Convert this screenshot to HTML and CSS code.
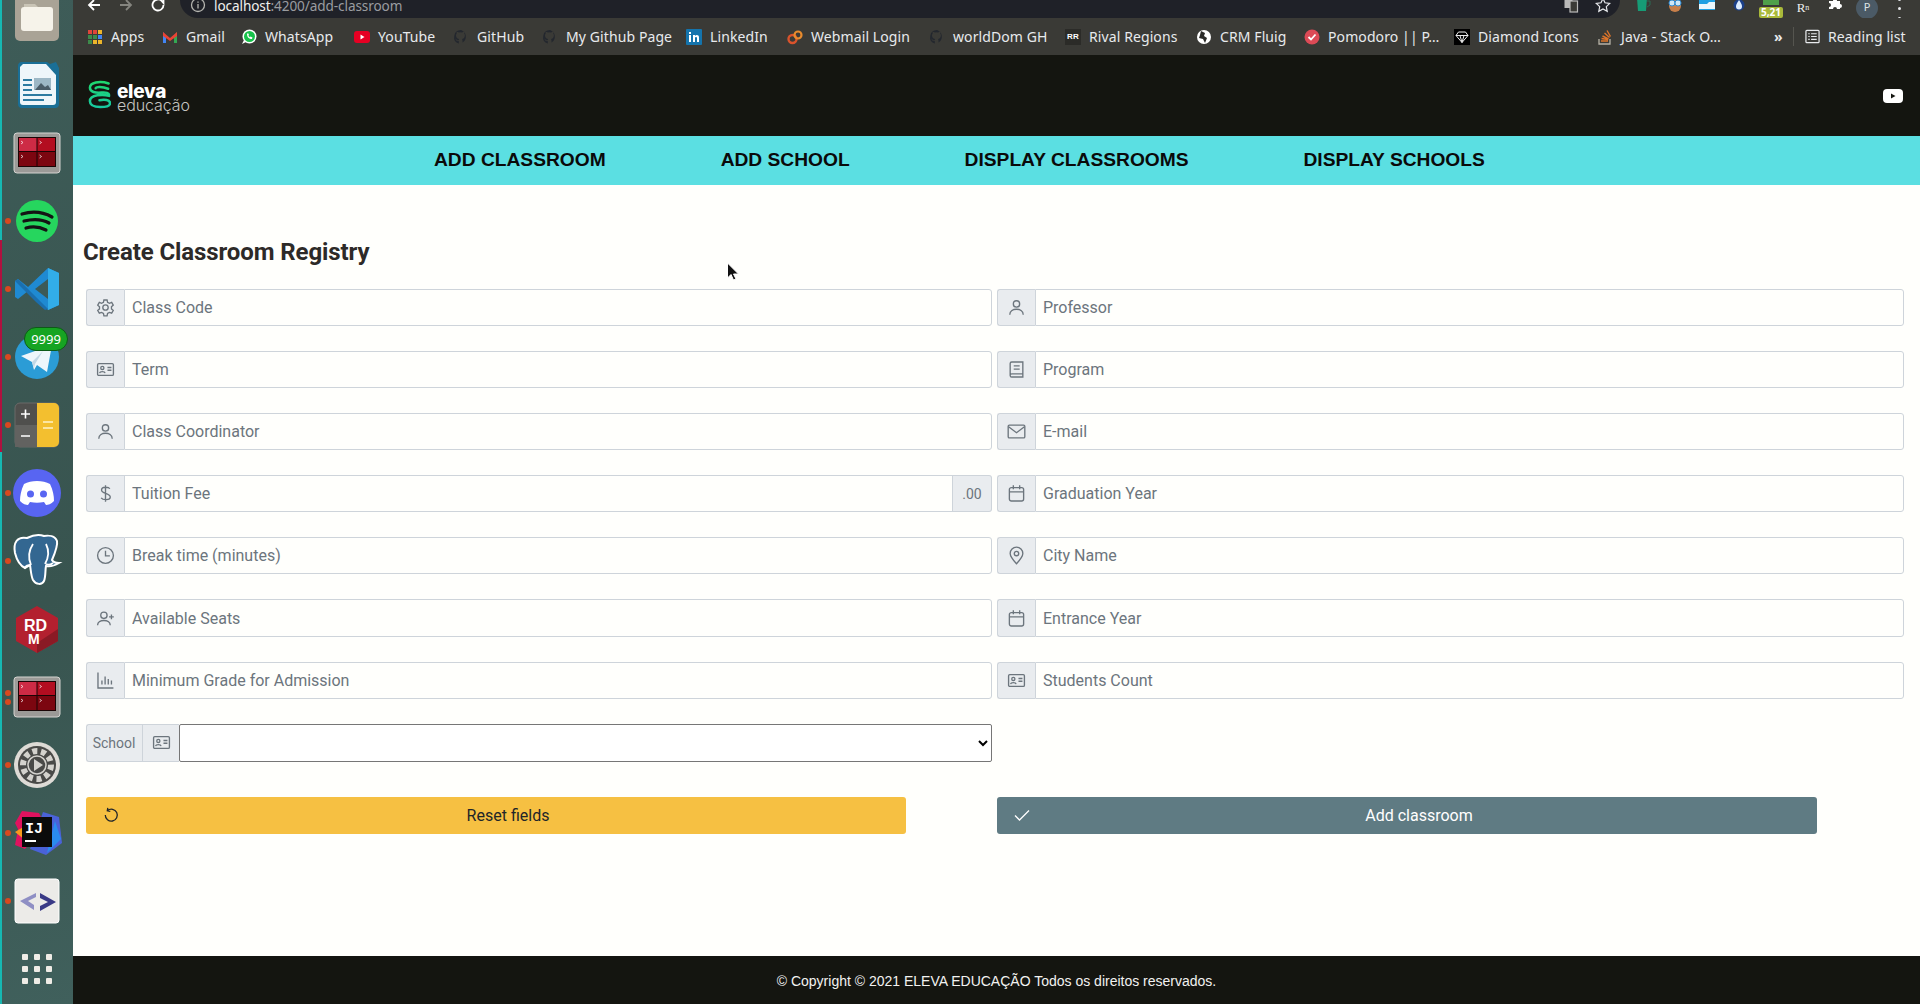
FILE: index.html
```html
<!DOCTYPE html>
<html lang="pt-BR">
<head>
  <meta charset="UTF-8" />
  <title>Create Classroom Registry</title>
  <link rel="stylesheet" href="styles.css">
</head>
<body>
  <!-- form icons -->
  <svg class="defs" width="0" height="0">
    <symbol id="i-gear" viewBox="0 0 24 24"><circle cx="12" cy="12" r="3.4"/><path d="M10 2.5h4l.6 3 2.4 1.2 2.8-1.1 2 3.4-2.3 2 .1 2.9 2.2 1.9-2 3.4-2.8-1-2.4 1.3-.6 3h-4l-.6-3-2.4-1.3-2.8 1-2-3.4 2.2-1.9V11L2.2 9l2-3.4L7 6.7l2.4-1.2z"/></symbol>
    <symbol id="i-card" viewBox="0 0 24 24"><rect x="2" y="4.5" width="20" height="15" rx="1.5"/><circle cx="8" cy="10" r="2"/><path d="M4.5 16.5c.5-2.5 6.500-2.500 7 0M14.500 9.500h5M14.500 13h5"/></symbol>
    <symbol id="i-user" viewBox="0 0 24 24"><circle cx="12" cy="7.500" r="4"/><path d="M3.500 21c0-9 17-9 17 0"/></symbol>
    <symbol id="i-dollar" viewBox="0 0 24 24"><path d="M12 1.500v21M17.500 6C16 3.500 7 3 7 7.500c0 5 11 3.500 11 9 0 4.500-9.500 4-11.500 1"/></symbol>
    <symbol id="i-clock" viewBox="0 0 24 24"><circle cx="12" cy="12" r="10"/><path d="M12 6v6.500h5.500"/></symbol>
    <symbol id="i-useradd" viewBox="0 0 24 24"><circle cx="10" cy="8" r="4"/><path d="M2 20.500c0-8 16-8 16 0M19.500 7v6M16.500 10h6"/></symbol>
    <symbol id="i-chart" viewBox="0 0 24 24"><path d="M2.500 2v19.500H22M7.500 17v-5M11.500 17V7M15.500 17v-7M19.500 17v-5"/></symbol>
    <symbol id="i-book" viewBox="0 0 24 24"><path d="M4 19.500V4.500A2 2 0 0 1 6 2.500h14v19H6a2 2 0 0 1 0-4h14M8.500 7.500h7.500M8.500 11.500h7.500"/></symbol>
    <symbol id="i-mail" viewBox="0 0 24 24"><rect x="1.500" y="4" width="21" height="16" rx="1.500"/><path d="M2 6l10 7.500L22 6"/></symbol>
    <symbol id="i-cal" viewBox="0 0 24 24"><rect x="3" y="4.500" width="18" height="17" rx="2.500"/><path d="M3 10h18M8 1.500v5M16 1.500v5"/></symbol>
    <symbol id="i-pin" viewBox="0 0 24 24"><path d="M12 22.500C7 17 4 13.500 4 9.500a8 8 0 0 1 16 0c0 4-3 7.500-8 13z"/><circle cx="12" cy="9.500" r="2.800"/></symbol>
    <symbol id="i-gh" viewBox="0 0 16 16"><path d="M8 1a7 7 0 0 0-2.200 13.600v-2.500C3.500 12.500 3 11 3 11c-.4-1-.9-1.200-.9-1.200.8 0 1.300.7 1.300.7.700 1.200 1.900.8 2.300.6 0-.5.300-.9.500-1.100C4.500 9.800 3 9 3 6.500c0-.8.300-1.400.7-1.900 0-.2-.3-.9.100-1.800 0 0 .6-.2 1.900.7a6.600 6.600 0 0 1 3.500 0c1.300-.9 1.900-.7 1.900-.7.400.9.100 1.600.1 1.800.4.500.7 1.100.7 1.900 0 2.500-1.500 3.300-2.900 3.500.2.200.5.700.5 1.300v2.300A7 7 0 0 0 8 1z"/></symbol>
  </svg>

  <div class="screen">
    <aside class="dock">
      <div class="slot">
        <svg viewBox="0 0 60 60" width="60" height="60"><rect x="8" y="2" width="44" height="52" rx="5" fill="#a9a396"/><path d="M17 17h11l3 3H17z" fill="#c9c4b6"/><path d="M14 23a3 3 0 0 1 3-3h26a3 3 0 0 1 3 3v18a3 3 0 0 1-3 3H17a3 3 0 0 1-3-3z" fill="#f6f3ea"/></svg>
      </div>
      <div class="slot">
        <svg viewBox="0 0 60 60" width="60" height="60"><path d="M14 7h26l3 2 6-2 3 6v36a4 4 0 0 1-4 4H15a4 4 0 0 1-4-4V11a4 4 0 0 1 3-4z" fill="#1a6f96"/><path d="M16 9h23l10 11v27a3 3 0 0 1-3 3H16a3 3 0 0 1-3-3V12z" fill="#eef6fa"/><path d="M16 24h9v2h-9zM16 29h9v2h-9zM16 34h9v2h-9zM16 39h29v2H16zM16 44h21v2H16z" fill="#2c7ba1"/><rect x="27" y="23" width="17" height="12" fill="#9db8c6"/><path d="M28 35l6-7 4 4 3-2 3 5z" fill="#4a5d68"/></svg>
      </div>
      <div class="slot">
        <svg viewBox="0 0 60 60" width="60" height="60"><use href="#term"/></svg>
      </div>
      <div class="slot running">
        <svg viewBox="0 0 60 60" width="60" height="60"><circle cx="30" cy="30" r="21" fill="#26d65e"/><path d="M15 23c10-3 21-2 30 3M17 30c8-2 18-2 25 2M19 37c7-2 14-1 20 2" fill="none" stroke="#141414" stroke-width="3.200" stroke-linecap="round"/></svg>
      </div>
      <div class="slot running">
        <svg viewBox="0 0 60 60" width="60" height="60"><path d="M41 9l11 5v32l-11 5-20-19-10 8-3-2v-16l3-2 10 8z" fill="#1f8ad2"/><path d="M41 9l11 5v32l-11 5z" fill="#32ade8"/><path d="M41 20L28 30l13 10z" fill="#3c5a57"/><path d="M8 22l3-2 30 30-3 1-9-8z" fill="#1b6fae"/></svg>
      </div>
      <div class="slot running">
        <svg viewBox="0 0 60 60" width="60" height="60"><circle cx="30" cy="30" r="22" fill="#2b9cd6"/><path d="M14 29l31-11-5 27-10-7-3 5-2-8z" fill="#eef6fb"/><path d="M25 35l11-11-8 13-1 4z" fill="#c2d8e6"/></svg>
        <span class="badge">9999</span>
      </div>
      <div class="slot running">
        <svg viewBox="0 0 60 60" width="60" height="60"><rect x="8" y="8" width="44" height="44" rx="5" fill="#4f4f4d" stroke="#6a6a68"/><rect x="8" y="30" width="22" height="22" fill="#626260"/><path d="M30 8h17a5 5 0 0 1 5 5v34a5 5 0 0 1-5 5H30z" fill="#f3bf2f"/><path d="M14 19h9M18.500 14.500v9M14 41h9" stroke="#fff" stroke-width="1.600"/><path d="M36 27h10M36 33h10" stroke="#fff3c8" stroke-width="1.500"/></svg>
      </div>
      <div class="slot running">
        <svg viewBox="0 0 60 60" width="60" height="60"><circle cx="30" cy="30" r="24" fill="#5865f2"/><path d="M17 21c7-4 19-4 26 0 3 6 4 12 4 17-3 3-6 4-8 4l-2-3c-5 1-9 1-14 0l-2 3c-2 0-5-1-8-4 0-5 1-11 4-17z" fill="#fff"/><circle cx="23.500" cy="31" r="3.500" fill="#5865f2"/><circle cx="36.500" cy="31" r="3.500" fill="#5865f2"/></svg>
      </div>
      <div class="slot running">
        <svg viewBox="0 0 60 60" width="60" height="60"><path d="M20 7C10 5 6 12 8 22c2 8 6 13 10 15l5-3c1 6 1 11 3 15 3 5 9 5 11 1 2-5 1-11 2-15 4 1 8 0 13-3-3 0-6-1-7-3 3-7 6-14 5-19-2-5-8-6-13-5-5-2-11-1-17 2z" fill="#336791" stroke="#fff" stroke-width="2"/><path d="M26 13c-4 6-5 14-2 21M39 13c3 6 3 13-1 20M17 37c2-2 4-3 6-3M39 33c3 1 5 1 7-1" fill="none" stroke="#fff" stroke-width="1.800"/></svg>
      </div>
      <div class="slot">
        <svg viewBox="0 0 60 60" width="60" height="60"><path d="M30 7l21 12v23L30 54 9 42V19z" fill="#b3202f"/><path d="M51 30v12L30 54V44z" fill="#8a1a25"/><text x="17" y="32" class="rd">RD</text><text x="21" y="45" class="rd-m">M</text></svg>
      </div>
      <div class="slot two">
        <svg viewBox="0 0 60 60" width="60" height="60"><use href="#term"/></svg>
      </div>
      <div class="slot running">
        <svg viewBox="0 0 60 60" width="60" height="60"><circle cx="30" cy="30" r="23" fill="#dedbd6"/><circle cx="30" cy="30" r="19" fill="#4a4a48"/><circle cx="30" cy="30" r="14" fill="none" stroke="#d4d2cd" stroke-width="6" stroke-dasharray="5 3.700"/><circle cx="30" cy="30" r="9" fill="#4a4a48" stroke="#d4d2cd" stroke-width="1.500"/><path d="M27 24l9 6-9 6z" fill="#d4d2cd"/></svg>
      </div>
      <div class="slot running">
        <svg viewBox="0 0 60 60" width="60" height="60"><path d="M15 8l17 2 6 12-20 24-10-4 3-16-3-6z" fill="#e0125f"/><path d="M36 9l16 5 3 26-16 12-16-6z" fill="#4a62d8"/><path d="M48 18l6 18-14 14z" fill="#2a8cef"/><path d="M8 29l10-6v14z" fill="#f79a1c"/><rect x="15" y="14" width="30" height="30" fill="#0b0b0b"/><text x="18" y="30" class="ij">IJ</text><rect x="18" y="37" width="11" height="2" fill="#fff"/></svg>
      </div>
      <div class="slot running">
        <svg viewBox="0 0 60 60" width="60" height="60"><rect x="8" y="8" width="44" height="44" rx="3" fill="#ecebe8" stroke="#fff"/><path d="M29 22L13 30l14 9v-5l-6-4 8-4z" fill="#8f8fc4"/><path d="M33 22l16 9-16 9v-5l8-4-8-4z" fill="#3a3a86"/></svg>
      </div>
      <div class="slot">
        <div class="apps"><i></i><i></i><i></i><i></i><i></i><i></i><i></i><i></i><i></i></div>
      </div>
      <svg class="defs" width="0" height="0">
        <symbol id="term" viewBox="0 0 60 60"><rect x="7" y="10" width="46" height="40" rx="3" fill="#9b9a97" stroke="#d4d3d0"/><rect x="11" y="14" width="38" height="30" fill="#1a0505"/><rect x="12" y="15" width="17.500" height="13" fill="#cd2b45"/><rect x="30.500" y="15" width="17.500" height="13" fill="#b30d20"/><rect x="12" y="29" width="17.500" height="14" fill="#7c0610"/><rect x="30.500" y="29" width="17.500" height="14" fill="#7c0610"/><path d="M14 18l2 1.500-2 1.500M32.500 18l2 1.500-2 1.500M14 32l2 1.500-2 1.500M32.500 32l2 1.500-2 1.500" stroke="#fff" fill="none" stroke-width=".7"/></symbol>
      </svg>
    </aside>

    <div class="browser">
      <div class="toolbar">
        <div class="toolbar-row">
          <svg class="tb-ico" viewBox="0 0 16 16"><path d="M14 8H3M8 3L3 8l5 5"/></svg>
          <svg class="tb-ico dim" viewBox="0 0 16 16"><path d="M2 8h11M8 3l5 5-5 5"/></svg>
          <svg class="tb-ico" viewBox="0 0 16 16"><path d="M13.500 8a5.500 5.500 0 1 1-1.600-3.900L13.500 6V2"/></svg>
          <div class="omnibox">
            <svg class="info" viewBox="0 0 16 16"><circle cx="8" cy="8" r="6.500"/><path d="M8 7v4.500M8 4.500v1.200"/></svg>
            <span class="url"><b>localhost</b>:4200/add-classroom</span>
            <svg class="omni-ico" viewBox="0 0 16 16"><rect x="1.500" y="1" width="8" height="10" fill="#b9b9b9" stroke="none"/><rect x="7" y="4" width="7.500" height="11" fill="#3a3a36" stroke="#b9b9b9"/></svg>
            <svg class="omni-ico" viewBox="0 0 16 16"><path d="M8 1.500l2 4.300 4.700.6-3.400 3.200.9 4.700L8 12l-4.200 2.300.9-4.700L1.300 6.400 6 5.800z"/></svg>
          </div>
          <div class="extensions">
            <span class="ext"><svg viewBox="0 0 16 16" width="16" height="16"><path d="M2 0h10l-1 13H3z" fill="#169c76"/><path d="M12 3h3v4l-3 2" fill="none" stroke="#2a6b55"/></svg></span>
            <span class="ext"><svg viewBox="0 0 16 16" width="16" height="16"><circle cx="8" cy="8" r="6" fill="#c87f4a"/><circle cx="5" cy="5" r="3" fill="#cfe7f7" stroke="#2f8ad1"/><circle cx="11" cy="5" r="3" fill="#cfe7f7" stroke="#2f8ad1"/></svg></span>
            <span class="ext"><svg viewBox="0 0 16 16" width="16" height="16"><rect y="0" width="16" height="12" fill="#1e9fe2"/><path d="M0 6h8l2-2h6v7H0z" fill="#eaf6fc"/></svg></span>
            <span class="ext"><svg viewBox="0 0 16 16" width="16" height="16"><circle cx="8" cy="7" r="5.500" fill="#1b3f88"/><path d="M8 2c2 3 3 4.500 3 6.500a3 3 0 0 1-6 0C5 6.500 6 5 8 2z" fill="#dcecff"/></svg></span>
            <span class="ext ext-count"><span class="ext-count-top"></span><span class="ext-count-num">5,21</span></span>
            <span class="ext ext-r">R<small>n</small></span>
            <span class="ext"><svg viewBox="0 0 16 16" width="16" height="16"><path d="M2 3h4a2 2 0 0 1 4 0h3v3a2 2 0 0 1 0 4v1H10a2 2 0 0 0-4 0H2V9a2 2 0 0 0 0-4z" fill="#fff"/></svg></span>
            <span class="ext"><span class="avatar">P</span></span>
            <span class="ext"><span class="kebab"><i></i><i></i><i></i></span></span>
          </div>
        </div>
      </div>

      <div class="bookmarks">
        <div class="marks">
          <a class="mark"><svg viewBox="0 0 16 16" width="16" height="16"><path d="M1 1h4v4H1z" fill="#e0453a"/><path d="M6 1h4v4H6z" fill="#e0453a"/><path d="M11 1h4v4h-4z" fill="#ecb52b"/><path d="M1 6h4v4H1zM6 6h4v4H6z" fill="#3d8a4a"/><path d="M11 6h4v4h-4z" fill="#4285f4"/><path d="M1 11h4v4H1z" fill="#3d8a4a"/><path d="M6 11h4v4H6z" fill="#ecb52b"/><path d="M11 11h4v4h-4z" fill="#ecb52b"/></svg>Apps</a>
          <a class="mark"><svg viewBox="0 0 16 16" width="16" height="16"><path d="M1 3v11h3V7z" fill="#4285f4"/><path d="M15 3v11h-3V7z" fill="#34a853"/><path d="M1 3l7 6 7-6v4l-7 5-7-5z" fill="#ea4335"/></svg>Gmail</a>
          <a class="mark"><svg viewBox="0 0 16 16" width="16" height="16"><circle cx="8.500" cy="7.500" r="7" fill="#fff"/><circle cx="8.500" cy="7.500" r="5.500" fill="#17c24a"/><path d="M1 15l2-4 2 2z" fill="#fff"/><path d="M6 5c0 3 2 5 5 5l.5-1.500-2-1-.7.700-1.500-1.500.7-.7-1-2z" fill="#fff"/></svg>WhatsApp</a>
          <a class="mark"><svg viewBox="0 0 16 16" width="16" height="16"><rect x="0" y="2" width="16" height="12" rx="3" fill="#e60023"/><path d="M6.500 5.500l4 2.500-4 2.500z" fill="#fff"/></svg>YouTube</a>
          <a class="mark"><svg class="gh" width="16" height="16"><use href="#i-gh"/></svg>GitHub</a>
          <a class="mark"><svg class="gh" width="16" height="16"><use href="#i-gh"/></svg>My Github Page</a>
          <a class="mark"><svg viewBox="0 0 16 16" width="16" height="16"><rect width="16" height="16" rx="1" fill="#1474ad"/><path d="M3 6h2v7H3zM3 3h2v2H3zM7 6h2v1c1-1.500 4-1.500 4 1.500V13h-2V9c0-1.500-2-1.500-2 0v4H7z" fill="#fff"/></svg>LinkedIn</a>
          <a class="mark"><svg viewBox="0 0 16 16" width="16" height="16"><circle cx="5.500" cy="10" r="4" fill="none" stroke="#d9532c" stroke-width="2.400"/><circle cx="11" cy="6" r="3.500" fill="none" stroke="#e88b2d" stroke-width="2.200"/></svg>Webmail Login</a>
          <a class="mark"><svg class="gh" width="16" height="16"><use href="#i-gh"/></svg>worldDom GH</a>
          <a class="mark"><span class="rr">RR</span>Rival Regions</a>
          <a class="mark"><svg viewBox="0 0 16 16" width="16" height="16"><circle cx="8" cy="8" r="7" fill="#fff"/><path d="M5 2l4 2-1 3 3 2-2 5-2-4-4-1 1-3z" fill="#2b2b28"/></svg>CRM Fluig</a>
          <a class="mark"><svg viewBox="0 0 16 16" width="16" height="16"><circle cx="8" cy="8" r="7.500" fill="#dc4a56"/><path d="M4.500 8l2.500 2.500 4.500-5" fill="none" stroke="#fff" stroke-width="1.800"/></svg>Pomodoro || P…</a>
          <a class="mark"><svg viewBox="0 0 16 16" width="16" height="16"><rect width="16" height="16" fill="#000"/><path d="M4.500 3h7L14 6.500 8 13.500 2 6.500zM2 6.500h12M6 6.500L8 13.500 10 6.500" fill="none" stroke="#eee"/></svg>Diamond Icons</a>
          <a class="mark"><svg viewBox="0 0 16 16" width="16" height="16"><path d="M2 10v5h11v-5" fill="none" stroke="#b6b1a6" stroke-width="1.300"/><path d="M4 12h7M4.500 9.500l6.500 1M5.500 7l6 3M7.500 4l5 4.500M10 1.500l3.500 6" stroke="#e0752a" stroke-width="1.400"/></svg>Java - Stack O…</a>
        </div>
        <span class="more">»</span>
        <span class="reading"><svg viewBox="0 0 16 16" width="15" height="15"><rect x="1" y="1.500" width="14" height="13" rx="1" fill="none" stroke="#e8eaed" stroke-width="1.300"/><path d="M3.500 5h1.500M6.500 5h6M3.500 8h1.500M6.500 8h6M3.500 11h1.500M6.500 11h6" stroke="#e8eaed" stroke-width="1.200"/></svg>Reading list</span>
      </div>

      <header class="top">
        <div class="logo">
          <svg viewBox="0 0 24 30" width="23" height="29"><defs><linearGradient id="lg" x1="0" y1="0" x2="0" y2="1"><stop offset="0" stop-color="#1fd86f"/><stop offset="1" stop-color="#17c9a0"/></linearGradient></defs><path d="M21.500 3.500C12 .5 2 2.500 2 8c0 4.500 6 5.500 12 5 5-.5 8 .5 8 2.500M21 9C15 6.800 8 6.800 8 8.500M22 16.500C16 14.500 2 15 2 22c0 5 6 6 11 6s10-1 10-4c0-3.500-6-4-11-3" fill="none" stroke="url(#lg)" stroke-width="2.600" stroke-linecap="round"/></svg>
          <div class="logo-text">
            <span class="logo-name">eleva</span>
            <span class="logo-sub">educação</span>
          </div>
        </div>
        <svg class="yt" viewBox="0 0 20 14" width="20" height="14"><rect width="20" height="14" rx="4" fill="#fff"/><path d="M8 4.500l4.500 2.500L8 9.500z" fill="#141510"/></svg>
      </header>

      <nav class="menu">
        <a>ADD CLASSROOM</a>
        <a>ADD SCHOOL</a>
        <a>DISPLAY CLASSROOMS</a>
        <a>DISPLAY SCHOOLS</a>
      </nav>

      <main class="content">
        <h2 class="title">Create Classroom Registry</h2>

        <form class="fields">
          <div class="group"><span class="addon"><svg class="ico"><use href="#i-gear"/></svg></span><input placeholder="Class Code"></div>
          <div class="group"><span class="addon"><svg class="ico"><use href="#i-user"/></svg></span><input placeholder="Professor"></div>
          <div class="group"><span class="addon"><svg class="ico"><use href="#i-card"/></svg></span><input placeholder="Term"></div>
          <div class="group"><span class="addon"><svg class="ico"><use href="#i-book"/></svg></span><input placeholder="Program"></div>
          <div class="group"><span class="addon"><svg class="ico"><use href="#i-user"/></svg></span><input placeholder="Class Coordinator"></div>
          <div class="group"><span class="addon"><svg class="ico"><use href="#i-mail"/></svg></span><input placeholder="E-mail"></div>
          <div class="group"><span class="addon"><svg class="ico"><use href="#i-dollar"/></svg></span><input placeholder="Tuition Fee"><span class="addon addon-end">.00</span></div>
          <div class="group"><span class="addon"><svg class="ico"><use href="#i-cal"/></svg></span><input placeholder="Graduation Year"></div>
          <div class="group"><span class="addon"><svg class="ico"><use href="#i-clock"/></svg></span><input placeholder="Break time (minutes)"></div>
          <div class="group"><span class="addon"><svg class="ico"><use href="#i-pin"/></svg></span><input placeholder="City Name"></div>
          <div class="group"><span class="addon"><svg class="ico"><use href="#i-useradd"/></svg></span><input placeholder="Available Seats"></div>
          <div class="group"><span class="addon"><svg class="ico"><use href="#i-cal"/></svg></span><input placeholder="Entrance Year"></div>
          <div class="group"><span class="addon"><svg class="ico"><use href="#i-chart"/></svg></span><input placeholder="Minimum Grade for Admission"></div>
          <div class="group"><span class="addon"><svg class="ico"><use href="#i-card"/></svg></span><input placeholder="Students Count"></div>
          <div class="group group-select">
            <span class="addon addon-label">School</span>
            <span class="addon addon-mid"><svg class="ico"><use href="#i-card"/></svg></span>
            <select><option></option></select>
          </div>
        </form>

        <div class="actions">
          <button class="btn btn-reset" type="button">
            <svg viewBox="0 0 16 16" width="16" height="16"><path d="M4.500 3.500A6 6 0 1 1 2.300 8M4.800 .8L4.300 3.700l3 .6"/></svg>
            Reset fields
          </button>
          <button class="btn btn-add" type="button">
            <svg viewBox="0 0 16 16" width="16" height="16"><path d="M1 8.500l4.500 4.500L15 3.500"/></svg>
            Add classroom
          </button>
        </div>

        <svg class="pointer" viewBox="0 0 14 20" width="14" height="20"><path d="M1.500 1v15l3.500-3.500 2.500 5.500 2.500-1-2.500-5h5z" fill="#111" stroke="#fff"/></svg>
      </main>

      <footer class="foot">© Copyright © 2021 ELEVA EDUCAÇÃO Todos os direitos reservados.</footer>
    </div>
  </div>
</body>
</html>
```

FILE: styles.css
```css
* {
  box-sizing: border-box;
}

body {
  margin: 0;
  height: 100vh;
  overflow: hidden;
  background: #fffffc;
  font-family: Roboto, sans-serif;
}

.defs {
  position: absolute;
}

.screen {
  display: flex;
  height: 1004px;
}

/* ubuntu dock */
.dock {
  width: 73px;
  flex: none;
  height: 1004px;
  overflow: hidden;
  background: linear-gradient(160deg, #3e5c58, #38544f 60%, #40605c);
  border-left: 2px solid #16b8b2;
  border-image: linear-gradient(to bottom, #16b8b2 0 24%, #b0103f 24% 45%, #16b8b2 45% 100%) 1;
}

.slot {
  position: relative;
  height: 68px;
  display: flex;
  align-items: center;
  justify-content: center;
  margin-left: -2px;
}

.slot:first-child {
  margin-top: -17px;
}

.running::before,
.two::before,
.two::after {
  content: "";
  position: absolute;
  left: 5px;
  top: 31px;
  width: 6px;
  height: 6px;
  border-radius: 50%;
  background: #d9481f;
}

.two::before {
  top: 27px;
}

.two::after {
  top: 36px;
}

.badge {
  position: absolute;
  left: 24px;
  top: 4px;
  width: 44px;
  height: 24px;
  border-radius: 12px;
  background: #16a422;
  border: 1px solid #0d5a18;
  color: #fff;
  font: 13px/22px "Noto Sans", sans-serif;
  text-align: center;
}

.rd {
  font: bold 16px "Liberation Sans", sans-serif;
  fill: #fff;
}

.rd-m {
  font: bold 14px "Liberation Sans", sans-serif;
  fill: #fff;
}

.ij {
  font: bold 15px "Liberation Mono", monospace;
  fill: #fff;
}

.apps {
  display: grid;
  grid-template-columns: repeat(3, 6px);
  gap: 6px;
}

.apps i {
  height: 6px;
  border-radius: 1px;
  background: #efece6;
}

.browser {
  flex: 1;
  min-width: 0;
  display: flex;
  flex-direction: column;
}

/* chrome toolbar, cut off at the top of the shot */
.toolbar {
  height: 18px;
  overflow: hidden;
  background: #3a3a36;
}

.toolbar-row {
  display: flex;
  gap: 16px;
  height: 36px;
  margin-top: -13px;
  padding: 0 5px 0 13px;
  align-items: center;
}

.tb-ico {
  width: 16px;
  height: 16px;
  flex: none;
  fill: none;
  stroke: #fff;
  stroke-width: 1.800;
}

.tb-ico.dim {
  stroke: #85857f;
}

.omnibox {
  flex: 1;
  align-self: flex-start;
  height: 31px;
  padding: 5px 9px 0 10px;
  margin: 0 -9px 0 -2px;
  display: flex;
  align-items: center;
  gap: 8px;
  background: #1f2128;
  border-radius: 0 0 18px 18px;
}

.info {
  width: 16px;
  height: 16px;
  fill: none;
  stroke: #b5b5b0;
  stroke-width: 1.300;
}

.url {
  flex: 1;
  color: #9a9ca0;
  font: 13.600px "Noto Sans", sans-serif;
  letter-spacing: -.1px;
}

.url b {
  font-weight: 400;
  color: #f1f1ee;
}

.omni-ico {
  width: 16px;
  height: 16px;
  margin-left: 8px;
  fill: none;
  stroke: #e8eaed;
  stroke-width: 1.200;
}

.extensions {
  display: flex;
}

.ext {
  width: 32px;
  height: 36px;
  padding-top: 13px;
  display: flex;
  justify-content: center;
  position: relative;
  overflow: hidden;
}

.ext svg {
  margin-top: -2px;
}

.ext-count-top {
  position: absolute;
  top: 13px;
  left: 8px;
  width: 16px;
  height: 5px;
  background: #4fa04a;
}

.ext-count-num {
  position: absolute;
  top: 20px;
  left: 4px;
  width: 24px;
  height: 11px;
  border-radius: 2px;
  background: #a9b93a;
  color: #fff;
  font: bold 10px/11px "Noto Sans", sans-serif;
  text-align: center;
}

.ext-r {
  color: #eceef0;
  font: 13px/15px "Liberation Serif", serif;
}

.ext-r small {
  font-size: 8px;
}

.avatar {
  width: 22px;
  height: 22px;
  margin-top: -3px;
  border-radius: 50%;
  background: #4b5a66;
  color: #dfe3e6;
  font: 11px/20px "Noto Sans", sans-serif;
  text-align: center;
}

.kebab {
  display: grid;
  gap: 3px;
  margin-top: -2px;
}

.kebab i {
  width: 3px;
  height: 3px;
  border-radius: 50%;
  background: #e8eaed;
}

.bookmarks {
  height: 37px;
  display: flex;
  align-items: center;
  padding-left: 14px;
  background: #3a3a36;
  color: #e8eaed;
  font: 14px "Noto Sans", sans-serif;
  letter-spacing: .1px;
  white-space: nowrap;
}

.marks {
  display: grid;
  grid-template-columns: 75px 79px 113px 99px 89px 144px 101px 142px 136px 131px 108px 150px 143px 178px;
}

.mark {
  display: flex;
  align-items: center;
  gap: 8px;
}

.gh {
  fill: #23272e;
}

.rr {
  width: 16px;
  height: 16px;
  background: #2b2b28;
  color: #fff;
  font: bold 8px/16px "Liberation Sans", sans-serif;
  text-align: center;
}

.more {
  margin-left: -1px;
  width: 15px;
  font-weight: 700;
}

.reading {
  display: flex;
  align-items: center;
  gap: 8px;
  margin-left: 4px;
  padding-left: 11px;
  border-left: 1px solid #55554f;
}

.top {
  height: 81px;
  flex: none;
  display: flex;
  align-items: center;
  justify-content: space-between;
  padding: 0 17px 0 15px;
  background: #141510;
}

.logo {
  display: flex;
  align-items: flex-start;
  gap: 6px;
  margin-top: 1px;
}

.logo-text {
  display: flex;
  flex-direction: column;
  margin-top: 5px;
}

.logo-name {
  color: #fff;
  font: 800 19px/14px Inter, sans-serif;
  letter-spacing: -.3px;
}

.logo-sub {
  margin-top: -1px;
  color: #c4c4c0;
  font: 300 16px/14px Inter, sans-serif;
  letter-spacing: -.1px;
}

.menu {
  height: 49px;
  flex: none;
  display: flex;
  align-items: center;
  gap: 115px;
  padding: 0 0 2px 361px;
  background: #5bdfe2;
  color: #0a0a0a;
  font: bold 19.200px "Liberation Sans", sans-serif;
  white-space: nowrap;
}

.content {
  flex: 1;
  position: relative;
  padding: 51px 16px 0 13px;
  background: #fffffc;
}

.title {
  margin: 1px 0 22px -3px;
  height: 30px;
  color: #2d2a28;
  font: 700 24px/30px Roboto, sans-serif;
  letter-spacing: -.1px;
}

.fields {
  display: grid;
  grid-template-columns: 906px 1fr;
  grid-auto-rows: 37.100px;
  gap: 25px 5px;
}

.group {
  display: flex;
  align-items: stretch;
}

.addon {
  flex: none;
  width: 37.500px;
  display: flex;
  align-items: center;
  justify-content: center;
  background: #e9ecef;
  border: 1.500px solid #ced4da;
  border-right-width: 0;
  border-radius: 3px 0 0 3px;
  color: #6c757d;
  font-size: 14px;
}

.addon-end {
  width: 39px;
  border-right-width: 1.500px;
  border-left-width: 0;
  border-radius: 0 3px 3px 0;
}

.ico {
  width: 19px;
  height: 19px;
  fill: none;
  stroke: #6c757d;
  stroke-width: 1.700;
}

.group input {
  flex: 1;
  min-width: 0;
  padding: 0 7.500px;
  border: 1.500px solid #ced4da;
  border-radius: 0 3px 3px 0;
  background: #fffffc;
  font: 16px Roboto, sans-serif;
  outline: none;
}

.group input::placeholder {
  color: #6c757d;
  opacity: 1;
}

.group input:not(:last-child) {
  border-radius: 0;
}

.group-select {
  height: 38px;
}

.addon-label {
  width: 56px;
  padding-right: 1px;
}

.addon-mid {
  width: 37px;
  border-radius: 0;
}

.group-select select {
  flex: 1;
  min-width: 0;
  height: 38px;
  border: 1px solid #767676;
  border-radius: 2px;
  background: #fff;
}

.actions {
  display: grid;
  grid-template-columns: 906px 1fr;
  gap: 5px;
  margin-top: 36px;
}

.btn {
  position: relative;
  width: 820px;
  height: 37px;
  padding: 0 0 0 24px;
  border: 0;
  border-radius: 3px;
  font: 16px Roboto, sans-serif;
}

.btn svg {
  position: absolute;
  left: 17px;
  top: 10px;
  fill: none;
  stroke: currentColor;
  stroke-width: 1.300;
}

.btn-reset {
  background: #f6c042;
  color: #212529;
}

.btn-add {
  background: #5f7b83;
  color: #fff;
}

.pointer {
  position: absolute;
  left: 653px;
  top: 77px;
}

.foot {
  height: 48px;
  flex: none;
  display: flex;
  align-items: center;
  justify-content: center;
  padding-top: 2px;
  background: #141510;
  color: #f2f2f0;
  font: 14px "Liberation Sans", sans-serif;
}
```
